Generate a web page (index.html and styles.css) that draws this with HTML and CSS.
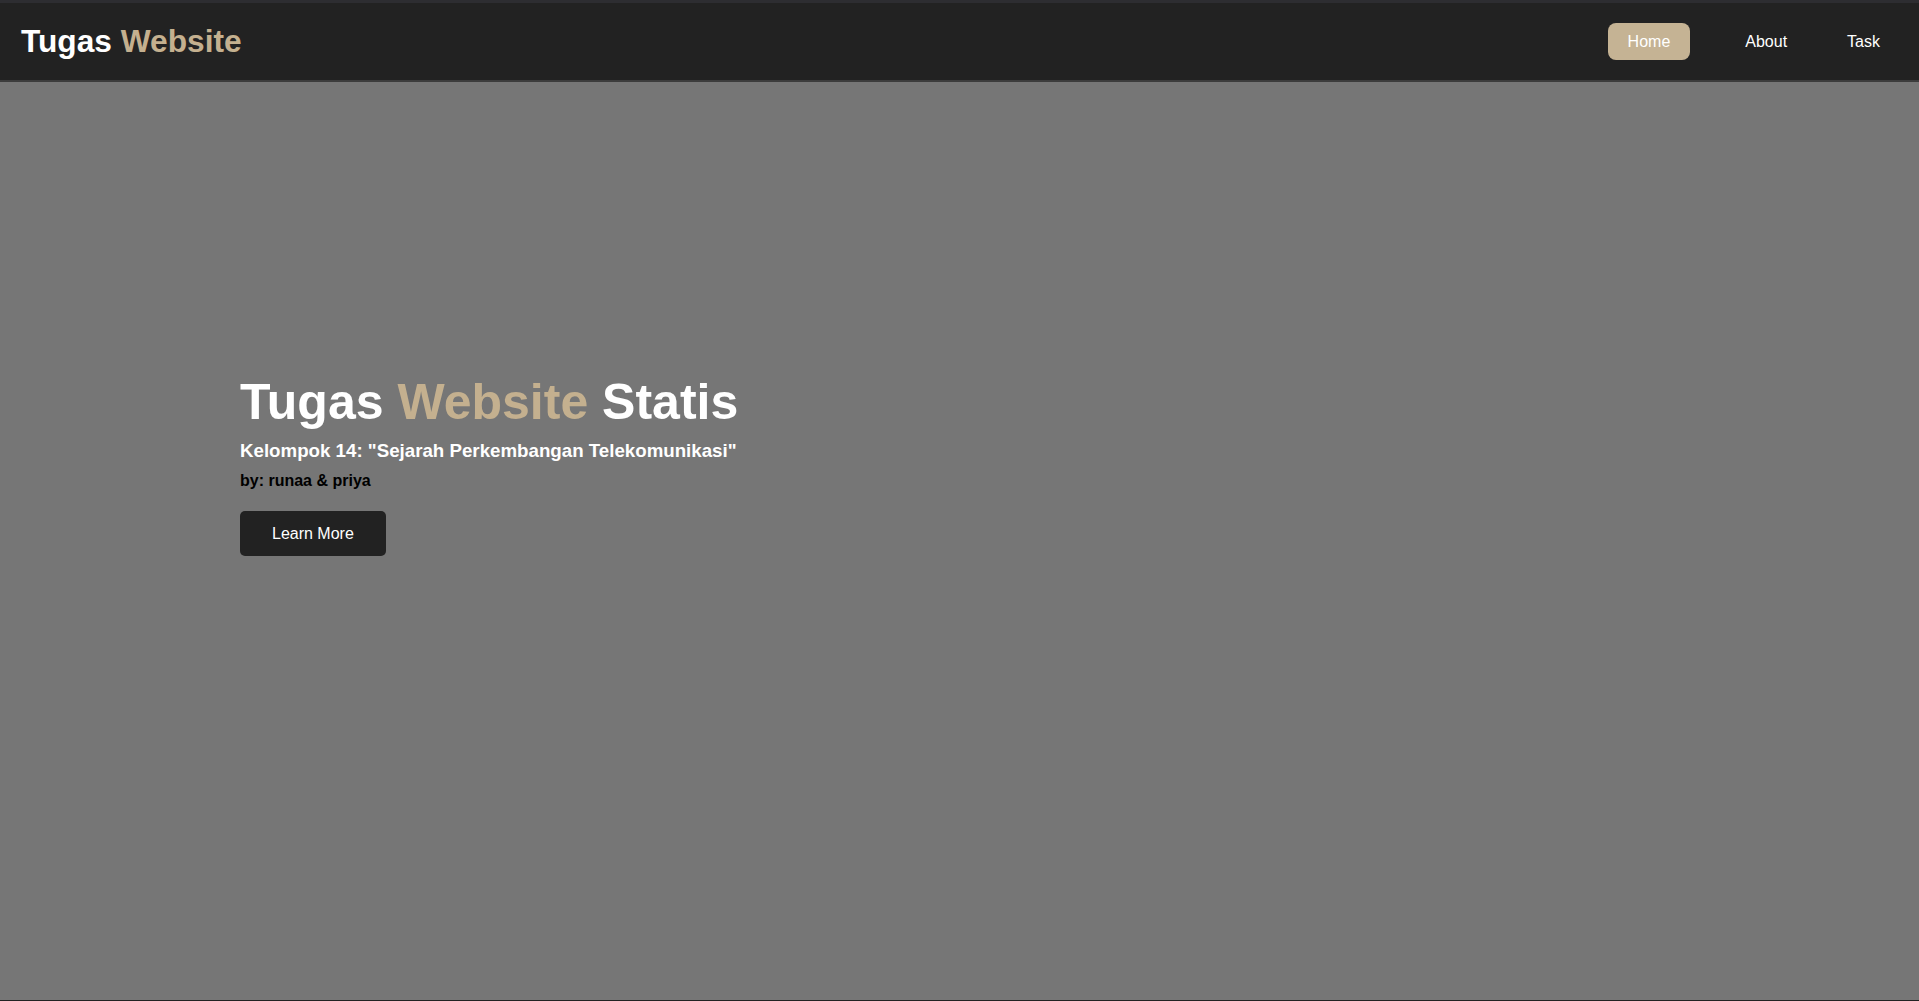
FILE: index.html
```html
<!DOCTYPE html>
<html lang="id">
<head>
<meta charset="utf-8">
<title>Tugas Website</title>
<link rel="stylesheet" href="styles.css">
</head>
<body>
<div class="topstrip"></div>
<header class="navbar">
  <div class="logo">Tugas <span class="accent">Website</span></div>
  <nav>
    <ul class="nav-list">
      <li><a class="nav-link active" href="#">Home</a></li>
      <li><a class="nav-link" href="#">About</a></li>
      <li><a class="nav-link" href="#">Task</a></li>
    </ul>
  </nav>
</header>
<main class="hero">
  <div class="hero-content">
    <h1 class="hero-title">Tugas <span class="accent">Website</span> Statis</h1>
    <h3 class="hero-sub">Kelompok 14: "Sejarah Perkembangan Telekomunikasi"</h3>
    <p class="hero-by">by: runaa &amp; priya</p>
    <a class="btn" href="#">Learn More</a>
  </div>
</main>
</body>
</html>
```
FILE: styles.css
```css
* { box-sizing: border-box; }
html, body {
  margin: 0;
  padding: 0;
  height: 100%;
}
body {
  font-family: "Liberation Sans", Arial, sans-serif;
  background: #767676;
  display: flex;
  flex-direction: column;
  min-height: 1001px;
}
.topstrip {
  height: 3px;
  background: #2d2d31;
}
.navbar {
  height: 79px;
  background: #222222;
  border-bottom: 2px solid #3c3c3c;
  display: flex;
  align-items: center;
  justify-content: space-between;
  padding: 0 19px 0 21px;
}
.logo {
  font-size: 31.7px;
  font-weight: bold;
  color: #ffffff;
  padding-bottom: 1px;
}
.accent { color: #c4b08f; }
.nav-list {
  list-style: none;
  margin: 0;
  padding: 0;
  display: flex;
  align-items: center;
  gap: 20px;
}
.nav-link {
  display: block;
  color: #ffffff;
  text-decoration: none;
  font-size: 16px;
  line-height: 19px;
  padding: 9px 20px;
  border-radius: 8px;
}
.nav-link.active {
  background: #c5b394;
  margin-right: 15px;
}
.hero {
  flex: 1;
  padding: 291px 0 0 240px;
  border-bottom: 1px solid #222222;
}
.hero-content {
  display: flex;
  flex-direction: column;
  align-items: flex-start;
}
.hero-title {
  margin: 0;
  font-size: 50px;
  font-weight: bold;
  color: #ffffff;
}
.hero-sub {
  margin: 9px 0 0;
  font-size: 18.72px;
  font-weight: bold;
  color: #ffffff;
}
.hero-by {
  margin: 10px 0 0;
  font-size: 16px;
  font-weight: bold;
  color: #000000;
}
.btn {
  margin-top: 21px;
  display: block;
  background: #222222;
  color: #ffffff;
  text-decoration: none;
  font-size: 16px;
  line-height: 19px;
  padding: 13px 32px;
  border-radius: 5px;
}
```
